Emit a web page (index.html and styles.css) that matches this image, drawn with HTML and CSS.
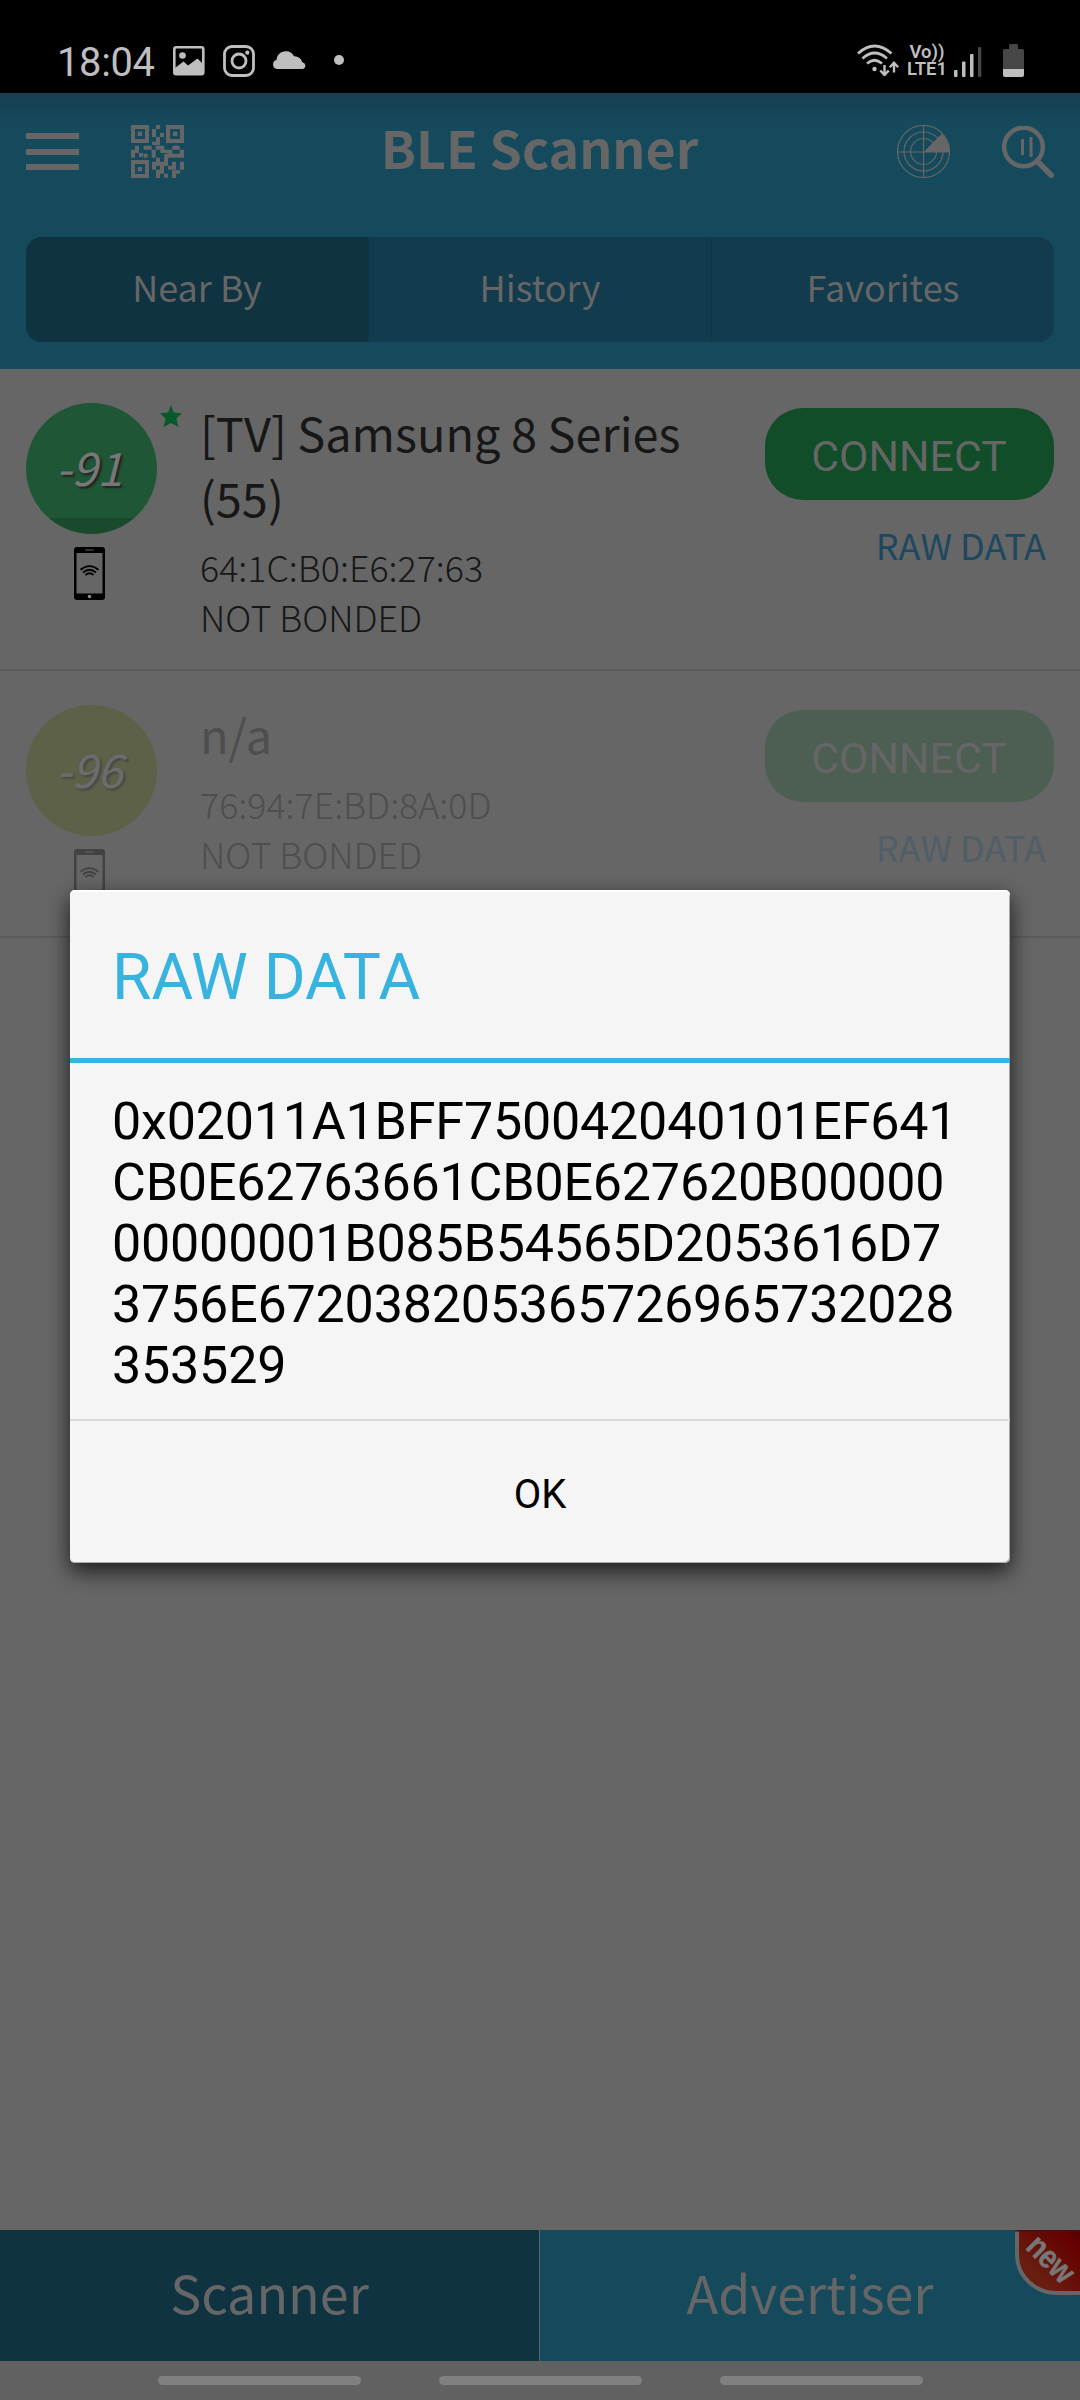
FILE: index.html
```html
<!DOCTYPE html>
<html lang="en">
<head>
<meta charset="utf-8">
<title>BLE Scanner</title>
<link rel="stylesheet" href="styles.css">
</head>
<body>
<svg class="defs" width="0" height="0">
  <symbol id="phone" viewBox="0 0 31 53">
    <path fill-rule="evenodd" d="M3 0H28Q31 0 31 3V50Q31 53 28 53H3Q0 53 0 50V3Q0 0 3 0ZM2.5 6V46.500H28.500V6Z"/>
    <rect x="11" y="2" width="9" height="2" rx="1" fill="#333"/>
    <circle cx="15.500" cy="49.500" r="1.800" fill="#888"/>
    <g fill="none" stroke="currentColor" stroke-width="1.800">
      <path d="M6.500 22.800Q15.500 15.500 24.500 22.800"/>
      <path d="M9 25.500Q15.500 20 22 25.500"/>
      <path d="M11.500 28Q15.500 24.500 19.500 28"/>
    </g>
  </symbol>
</svg>
<div class="screen">
  <header class="status">
    <div class="status-left">
      <span class="clock">18:04</span>
      <svg class="s-image" viewBox="0 0 32 30" width="32" height="30"><rect x="1.300" y="1.300" width="29" height="27" rx="2" fill="none" stroke="#bfbfbf" stroke-width="2.600"/><circle cx="9.500" cy="9.500" r="3.300" fill="#bfbfbf"/><path fill="#bfbfbf" d="M2 22L10.500 15.500L15 19.500L24.500 12.500L30 18V28H2Z"/></svg>
      <svg class="s-insta" viewBox="0 0 32 32" width="32" height="32" fill="none" stroke="#bfbfbf"><rect x="1.500" y="1.500" width="29" height="29" rx="7.500" stroke-width="2.800"/><circle cx="16" cy="16" r="7" stroke-width="2.800"/><circle cx="24.300" cy="7.700" r="2.100" fill="#bfbfbf" stroke="none"/></svg>
      <svg class="s-cloud" viewBox="0 0 34 19" width="34" height="19"><path fill="#bfbfbf" d="M5 19A4.600 4.600 0 0 1 4.500 10A9.300 9.300 0 0 1 22 6.200A8 8 0 0 1 30.300 12.200A3.500 3.500 0 0 1 31 19Z"/></svg>
      <i class="s-dot"></i>
    </div>
    <div class="status-right">
      <svg class="s-wifi" viewBox="0 0 42 32" width="42" height="32" fill="none" stroke="#bfbfbf" stroke-width="2.700"><path d="M1 9.500Q17.500 -5.500 34.500 9.500"/><path d="M5.500 14.500Q17.500 3.500 30 14.500"/><path d="M10 19.500Q17.500 13 25 19.500"/><circle cx="17.500" cy="25" r="2.200" fill="#bfbfbf" stroke="none"/><path stroke-width="2.400" d="M27.500 21V30.500M23.300 26.500L27.500 31L31.700 26.500M37 28.500V19M32.800 23.300L37 18.800L41.200 23.300"/></svg>
      <div class="volte"><span>Vo))</span><span>LTE1</span></div>
      <svg class="s-signal" viewBox="0 0 28 31" width="28" height="31" fill="#bfbfbf"><rect x="0" y="24" width="3.500" height="7" rx="1"/><rect x="8" y="15.500" width="3.500" height="15.500" rx="1"/><rect x="16" y="8" width="3.500" height="23" rx="1"/><rect x="24" y="1" width="3.300" height="30" rx="1" fill="#464646"/></svg>
      <svg class="s-batt" viewBox="0 0 21 33" width="21" height="33"><path fill="#464646" d="M6 5V1.500Q6 0 7.500 0H13.500Q15 0 15 1.500V5H19.500Q21 5 21 6.500V25H0V6.500Q0 5 1.500 5Z"/><path fill="#bfbfbf" d="M0 25H21V31Q21 33 19 33H2Q0 33 0 31Z"/></svg>
    </div>
  </header>

  <div class="appbar">
    <div class="toolbar">
      <div class="burger"><i></i><i></i><i></i></div>
      <svg class="qr" viewBox="0 0 159 159" width="53" height="53">
        <g fill="none" stroke="#666" stroke-width="12"><rect x="6" y="6" width="42" height="42"/><rect x="111" y="6" width="42" height="42"/><rect x="6" y="111" width="42" height="42"/></g>
        <g fill="#666"><rect x="20" y="20" width="13" height="13"/><rect x="126" y="20" width="13" height="13"/><rect x="20" y="126" width="13" height="13"/>
        <path d="M75 0H87V12H75ZM63 12H75V36H63ZM87 24H99V36H87ZM75 36H87V60H63V50H75ZM12 62H24V74H12ZM38 62H62V74H38ZM62 74H74V98H62ZM0 74H12V98H0ZM12 74H24V84H12ZM24 84H36V96H24ZM38 86H50V98H38ZM74 62H100V74H74ZM88 74H112V84H88ZM100 86H124V98H100ZM112 74H124V86H112ZM124 62H146V74H124ZM146 74H159V98H124V86H146ZM75 98H87V110H75ZM63 110H75V134H63ZM75 110H111V122H75ZM99 98H111V110H99ZM87 122H99V134H87ZM111 122H135V134H111ZM123 110H135V122H123ZM147 110H159V134H147ZM75 134H99V146H75ZM75 146H87V159H75ZM99 146H111V158H99ZM123 146H135V159H123ZM123 136H147V146H123Z"/></g>
      </svg>
      <h1>BLE Scanner</h1>
      <svg class="radar" viewBox="0 0 53 53" width="53" height="53"><g fill="none" stroke="#666" stroke-width="1.200"><circle cx="26.500" cy="26.500" r="26"/><circle cx="26.500" cy="26.500" r="19.500"/><circle cx="26.500" cy="26.500" r="13"/><path d="M26.500 0V53M0 27H53"/></g><path fill="#666" d="M26.500 27L45 8.500A26 26 0 0 1 52.500 27Z"/></svg>
      <svg class="find" viewBox="0 0 52 52" width="52" height="52" fill="none" stroke="#666"><circle cx="21.500" cy="21" r="19.300" stroke-width="4.500"/><path stroke-width="3" d="M20.500 13V29M29 11V31"/><path stroke-width="5.500" d="M35 35L51 51"/></svg>
    </div>
    <nav class="tabs"><span class="tab on">Near By</span><span class="tab">History</span><span class="tab">Favorites</span></nav>
  </div>

  <main class="list">
    <section class="row">
      <div class="signal">
        <div class="rssi strong">-91</div>
        <svg class="star" viewBox="0 0 22 22" width="22" height="22"><path fill="#05592a" d="M11 0L13.800 7.600L22 8.300L16.300 13.500L18.500 22L11 18L3.500 22L5.700 13.500L0 8.300L8.200 7.600Z"/></svg>
        <svg class="phone" width="31" height="53"><use href="#phone"/></svg>
      </div>
      <div class="info"><h2>[TV] Samsung 8 Series (55)</h2><p>64:1C:B0:E6:27:63</p><p>NOT BONDED</p></div>
      <div class="actions"><span class="connect">CONNECT</span><span class="raw">RAW DATA</span></div>
    </section>
    <section class="row faded">
      <div class="signal">
        <div class="rssi weak">-96</div>
        <svg class="phone" width="31" height="53"><use href="#phone"/></svg>
      </div>
      <div class="info"><h2>n/a</h2><p>76:94:7E:BD:8A:0D</p><p>NOT BONDED</p></div>
      <div class="actions"><span class="connect">CONNECT</span><span class="raw">RAW DATA</span></div>
    </section>
  </main>

  <footer class="bottom">
    <span class="mode on">Scanner</span><span class="mode">Advertiser</span>
    <div class="badge">
      <svg viewBox="0 0 65 66" width="65" height="66"><defs><linearGradient id="red" x1="1" y1="0" x2="0.300" y2="0.700"><stop offset="0" stop-color="#400000"/><stop offset="0.250" stop-color="#650000"/><stop offset="0.600" stop-color="#660b05"/><stop offset="1" stop-color="#691c10"/></linearGradient></defs><path fill="url(#red)" stroke="#666" stroke-width="4" d="M2 -4V25C2 46 20 63 42 63H70V-4Z"/><path d="M0 0H65V1.500H0Z" fill="#4a1010"/></svg>
      <span>new</span>
    </div>
  </footer>
  <div class="gestures"><i></i><i></i><i></i></div>

  <div class="dialog">
    <h3>RAW DATA</h3>
    <div class="message">0x02011A1BFF750042040101EF641<br>CB0E62763661CB0E627620B00000<br>00000001B085B54565D2053616D7<br>3756E672038205365726965732028<br>353529</div>
    <div class="ok">OK</div>
  </div>
</div>
</body>
</html>
```
FILE: styles.css
```css
* { box-sizing: border-box; margin: 0; padding: 0; }
body { background: #666; }
.defs { position: absolute; }
svg { display: block; flex: none; }
i { display: block; }
.screen {
  position: relative;
  width: 1080px;
  height: 2400px;
  overflow: hidden;
  display: flex;
  flex-direction: column;
  background: #666;
  color: #171717;
  font-family: "Noto Sans CJK JP", "Noto Sans CJK SC", sans-serif;
}

/* status bar */
.status {
  height: 93px;
  background: #000;
  color: #bfbfbf;
  display: flex;
  justify-content: space-between;
  font-family: Roboto, sans-serif;
}
.status-left, .status-right { display: flex; align-items: flex-start; }
.status-left { padding-left: 57px; }
.clock { width: 116px; font-size: 39.800px; line-height: 48px; margin-top: 39px; letter-spacing: -.3px; white-space: nowrap; }
.s-image { margin-top: 46px; }
.s-insta { margin: 45px 0 0 18px; }
.s-cloud { margin: 50px 0 0 17px; }
.s-dot { width: 10px; height: 10px; border-radius: 50%; background: #bfbfbf; margin: 55px 0 0 28px; }
.status-right { padding-right: 56px; }
.s-wifi { margin-top: 44px; }
.volte { width: 40px; margin: 44px 0 0 8px; display: flex; flex-direction: column; align-items: center; font-size: 18.500px; line-height: 17px; font-weight: 600; white-space: nowrap; }
.s-signal { margin: 46px 0 0 7px; }
.s-batt { margin: 44px 0 0 21px; }

/* app bar */
.appbar { height: 276px; background: linear-gradient(#143f50, #154a5c 32px); color: #666; }
.toolbar { height: 144px; display: flex; align-items: flex-start; padding: 32px 26px 0; }
.burger { width: 53px; padding-top: 8px; display: flex; flex-direction: column; gap: 9.500px; }
.burger i { height: 6px; background: #666; }
.qr { margin-left: 52px; }
h1 { flex: 1; text-align: center; font-size: 51.800px; line-height: 74px; margin: -15px 0 0 -2px; font-weight: 700; white-space: nowrap; }
.radar { margin-right: 52px; }
.find { margin-top: 1px; }
.tabs { margin: 0 26px; height: 105px; display: flex; border-radius: 16px; overflow: hidden; background: #123b4d; }
.tab { flex: 1; text-align: center; font-size: 36px; line-height: 98px; border-right: 1px solid #103545; }
.tab:last-child { border: 0; }
.tab.on { background: #103341; }

/* device list */
.list { flex: 1; }
.row { display: flex; border-bottom: 2px solid #5b5b5b; padding: 34px 26px 0; height: 302px; }
.row + .row { height: 267px; }
.signal { position: relative; width: 174px; }
.rssi { width: 131px; height: 131px; border-radius: 50%; text-align: center; color: #777; font-size: 46px; font-style: italic; line-height: 126px; padding-right: 5px; text-shadow: 2px 2px 2px #222; }
.strong { background: linear-gradient(#1f5736 115px, #1a4a2d 115px); }
.weak { background: #5c6148; color: #6c6c6c; text-shadow: 2px 2px 2px #484848; }
.star { position: absolute; left: 134px; top: 2px; }
.phone { margin: 13px 0 0 48px; color: #000; fill: #000; }
.info { width: 520px; }
h2 { font-size: 46.900px; line-height: 65px; font-weight: 400; margin-top: -3px; }
.info p { font-size: 35.800px; line-height: 50px; font-weight: 300; color: #171717; }
.info h2 + p { padding-top: 11px; }
.actions { flex: 1; display: flex; flex-direction: column; align-items: flex-end; padding-top: 5px; }
.connect { width: 289px; height: 92px; border-radius: 38px; background: #104d28; color: #666; font: 42.800px/96px Roboto, sans-serif; padding-right: 1px; text-align: center; }
.raw { font-size: 36px; line-height: 52px; margin: 18px 8px 0 0; color: #1d4860; white-space: nowrap; }
.faded .info h2, .faded .info p { color: #4e4e4e; }
.faded .connect { background: #4d5e53; }
.faded .raw { color: #505e67; }
.faded .phone { opacity: .35; }

/* bottom modes */
.bottom { position: relative; height: 131px; display: flex; color: #666; font-size: 52px; line-height: 123px; text-align: center; overflow: hidden; }
.mode { flex: 1; background: #154a5c; }
.mode.on { flex: none; width: 540px; background: #103341; border-right: 1px solid #5f6466; }
.badge { position: absolute; right: 1px; top: 0; width: 64px; height: 66px; }
.badge span { position: absolute; left: 5px; top: 11px; width: 60px; text-align: center; transform: rotate(45deg) scaleX(.84); font: 700 33px/34px "Liberation Sans", sans-serif; letter-spacing: -.5px; -webkit-text-stroke: .5px #777; color: #777; }
.gestures { height: 39px; background: #616161; display: flex; justify-content: center; gap: 78px; padding: 15px 0 0 0; }
.gestures i { width: 203px; height: 9px; border-radius: 5px; background: #808080; }

/* dialog */
.dialog { position: absolute; left: 70px; top: 890px; width: 940px; height: 673px; border-radius: 5px; background: #f5f5f5; color: #000; font-family: Roboto, sans-serif; box-shadow: inset 0 2px #fff, inset -1px -1px #aaa, 0 8px 22px rgba(0,0,0,.75); display: flex; flex-direction: column; }
h3 { height: 173px; border-bottom: 5px solid #37b3e0; padding: 0 42px; font-size: 64px; line-height: 176px; font-weight: 400; color: #37b3e0; }
.message { height: 358px; border-bottom: 2px solid #dadada; padding: 28px 42px 0; font-size: 52px; line-height: 61px; letter-spacing: -.19px; white-space: nowrap; }
.ok { height: 142px; font-size: 40px; line-height: 148px; text-align: center; }
```
